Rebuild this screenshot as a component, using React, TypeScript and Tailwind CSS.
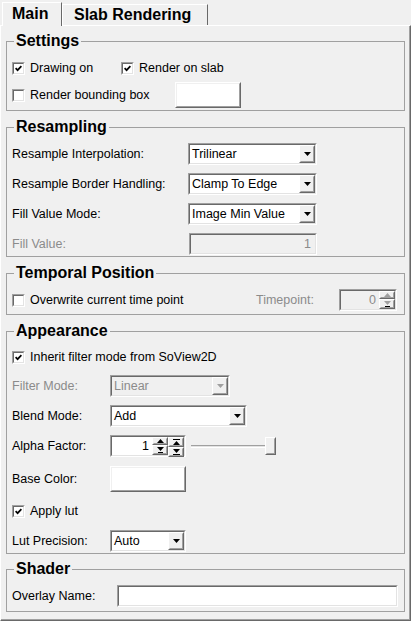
import React from "react";

// Windows-classic style property panel

const sunkenOuter = "border border-t-[#a0a0a0] border-l-[#a0a0a0] border-b-white border-r-white";
const sunkenInner = "border border-t-[#696969] border-l-[#696969] border-b-[#e3e3e3] border-r-[#e3e3e3]";
const raisedOuter = "border border-t-white border-l-white border-b-[#696969] border-r-[#696969]";
const raisedInner = "border border-t-[#f0f0f0] border-l-[#f0f0f0] border-b-[#a0a0a0] border-r-[#a0a0a0]";

const Down = ({ color = "#000" }: { color?: string }) => (
    <svg width="7" height="4" viewBox="0 0 7 4">
        <polygon points="0,0 7,0 3.5,4" fill={color} />
    </svg>
);

const Up = ({ color = "#000" }: { color?: string }) => (
    <svg width="7" height="4" viewBox="0 0 7 4">
        <polygon points="0,4 7,4 3.5,0" fill={color} />
    </svg>
);

const Check = ({ on }: { on?: boolean }) => (
    <span className={`w-[13px] h-[13px] shrink-0 flex ${sunkenOuter}`}>
        <span className={`flex-1 bg-white flex items-center justify-center ${sunkenInner}`}>
            {on && (
                <svg width="7" height="7" viewBox="0 0 7 7">
                    <path d="M0.6 3.2 L2.6 5.2 L6.4 1.2" stroke="#000" strokeWidth="1.7" fill="none" />
                </svg>
            )}
        </span>
    </span>
);

const CheckRow = ({ on, label }: { on?: boolean; label: string }) => (
    <span className="flex items-center gap-[5px]">
        <Check on={on} />
        <span>{label}</span>
    </span>
);

const Select = ({ value, className, disabled }: { value: string; className: string; disabled?: boolean }) => (
    <div className={`h-[22px] flex shrink-0 ${sunkenOuter} ${className}`}>
        <div className={`flex-1 flex items-center ${disabled ? "bg-[#f0f0f0] text-[#8b8b8b]" : "bg-white"} ${sunkenInner}`}>
            <span className="flex-1 pl-[2px] leading-none">{value}</span>
            <div className={`w-[16px] h-full flex ${raisedOuter} bg-[#f0f0f0]`}>
                <div className={`flex-1 flex items-center justify-center ${raisedInner}`}>
                    <Down color={disabled ? "#a0a0a0" : "#000"} />
                </div>
            </div>
        </div>
    </div>
);

const SpinButtons = ({ disabled, double }: { disabled?: boolean; double?: boolean }) => {
    const c = disabled ? "#a0a0a0" : "#000";
    return (
        <div className="w-[16px] h-full flex flex-col bg-[#f0f0f0]">
            <div className={`flex-1 flex ${raisedOuter}`}>
                <div className={`flex-1 flex flex-col items-center justify-center gap-[1px] ${raisedInner}`}>
                    {double && <span className="w-[7px] h-[1px] bg-black" />}
                    <Up color={c} />
                </div>
            </div>
            <div className={`flex-1 flex ${raisedOuter}`}>
                <div className={`flex-1 flex flex-col items-center justify-center gap-[1px] ${raisedInner}`}>
                    <Down color={c} />
                    {double ? <span className="w-[7px] h-[1px] bg-black" /> : <span className="w-[5px] h-[1px] bg-black" />}
                </div>
            </div>
        </div>
    );
};

const ColorButton = ({ className }: { className: string }) => (
    <div className={`h-[26px] flex shrink-0 ${raisedOuter} ${className}`}>
        <div className={`flex-1 bg-white ${raisedInner}`} />
    </div>
);

const Group = ({ title, className, children }: { title: string; className: string; children: React.ReactNode }) => (
    <fieldset className={`border border-[#a0a0a0] ${className}`}>
        <legend className="ml-[7px] px-[2px] font-bold text-[16px] leading-[18px]">{title}</legend>
        {children}
    </fieldset>
);

export default function App() {
    return (
        <div className="w-[411px] h-[621px] bg-[#f0f0f0] text-[12.5px] text-black font-['Liberation_Sans',Arial,sans-serif] flex flex-col">
            {/* tabs */}
            <div className="h-[26px] flex items-end pl-[2px] relative z-10 shrink-0">
                <div className="w-[60px] h-[24px] bg-[#f0f0f0] border-t border-l border-white border-r border-r-[#696969] pl-[9px] pt-[1px] font-bold text-[16px] leading-[20px]">
                    Main
                </div>
                <div className="w-[146px] h-[21px] mb-[1px] border-t border-l border-white border-r border-r-[#696969] pl-[11px] font-bold text-[16px] leading-[19px]">
                    Slab Rendering
                </div>
            </div>

            {/* panel */}
            <div className="-mt-[1px] flex-1 flex flex-col border-t border-l border-white border-r border-b border-r-[#696969] border-b-[#696969] shadow-[inset_-1px_-1px_0_#a0a0a0] pl-[5px] pr-[5px] pt-[6px]">
                <Group title="Settings" className="">
                    <div className="flex flex-col gap-[4px] pt-[8px] pb-[2px] pl-[5px]">
                        <div className="h-[20px] flex items-center">
                            <span className="w-[109px]">
                                <CheckRow on label="Drawing on" />
                            </span>
                            <CheckRow on label="Render on slab" />
                        </div>
                        <div className="h-[26px] flex items-center">
                            <span className="w-[163px]">
                                <CheckRow label="Render bounding box" />
                            </span>
                            <ColorButton className="w-[66px]" />
                        </div>
                    </div>
                </Group>

                <Group title="Resampling" className="mt-[7px]">
                    <div className="flex flex-col gap-[8px] pt-[7px] pb-[1px] pl-[5px]">
                        <div className="h-[22px] flex items-center">
                            <span className="w-[176px]">Resample Interpolation:</span>
                            <Select value="Trilinear" className="w-[129px]" />
                        </div>
                        <div className="h-[22px] flex items-center">
                            <span className="w-[176px]">Resample Border Handling:</span>
                            <Select value="Clamp To Edge" className="w-[129px]" />
                        </div>
                        <div className="h-[22px] flex items-center">
                            <span className="w-[176px]">Fill Value Mode:</span>
                            <Select value="Image Min Value" className="w-[129px]" />
                        </div>
                        <div className="h-[22px] flex items-center text-[#8b8b8b]">
                            <span className="w-[177px]">Fill Value:</span>
                            <div className={`w-[128px] h-[22px] flex ${sunkenOuter}`}>
                                <div className={`flex-1 flex items-center justify-end pr-[4px] bg-[#f0f0f0] ${sunkenInner}`}>1</div>
                            </div>
                        </div>
                    </div>
                </Group>

                <Group title="Temporal Position" className="mt-[7px]">
                    <div className="h-[22px] mt-[7px] mb-[3px] pl-[5px] flex items-center">
                        <span className="w-[244px]">
                            <CheckRow label="Overwrite current time point" />
                        </span>
                        <span className="w-[83px] text-[#8b8b8b]">Timepoint:</span>
                        <div className={`w-[58px] h-[22px] flex ${sunkenOuter}`}>
                            <div className={`flex-1 flex items-center bg-[#f0f0f0] ${sunkenInner}`}>
                                <span className="flex-1 text-right pr-[3px] text-[#8b8b8b]">0</span>
                                <SpinButtons disabled />
                            </div>
                        </div>
                    </div>
                </Group>

                <Group title="Appearance" className="mt-[7px]">
                    <div className="flex flex-col gap-[8px] pt-[7px] pb-[1px] pl-[5px]">
                        <div className="h-[20px] flex items-center">
                            <CheckRow on label="Inherit filter mode from SoView2D" />
                        </div>
                        <div className="h-[22px] flex items-center">
                            <span className="w-[98px] text-[#8b8b8b]">Filter Mode:</span>
                            <Select value="Linear" className="w-[120px]" disabled />
                        </div>
                        <div className="h-[22px] flex items-center">
                            <span className="w-[98px]">Blend Mode:</span>
                            <Select value="Add" className="w-[137px]" />
                        </div>
                        <div className="h-[22px] flex items-center">
                            <span className="w-[98px]">Alpha Factor:</span>
                            <div className={`w-[76px] h-[22px] flex ${sunkenOuter}`}>
                                <div className={`flex-1 flex items-center bg-white ${sunkenInner}`}>
                                    <span className="flex-1 text-right pr-[3px]">1</span>
                                    <SpinButtons />
                                    <SpinButtons double />
                                </div>
                            </div>
                            <div className="ml-[5px] w-[85px] h-[22px] flex items-center relative">
                                <div className="w-[80px] h-[3px] border-t border-t-[#a0a0a0] border-b border-b-white bg-[#e3e3e3]" />
                                <div className={`absolute left-[74px] top-[2px] w-[11px] h-[18px] flex bg-[#f0f0f0] ${raisedOuter}`}>
                                    <div className={`flex-1 ${raisedInner}`} />
                                </div>
                            </div>
                        </div>
                        <div className="h-[26px] mt-[1px] flex items-center">
                            <span className="w-[98px]">Base Color:</span>
                            <ColorButton className="w-[76px]" />
                        </div>
                        <div className="h-[20px] mt-[1px] flex items-center">
                            <CheckRow on label="Apply lut" />
                        </div>
                        <div className="h-[22px] mt-[1px] flex items-center">
                            <span className="w-[98px]">Lut Precision:</span>
                            <Select value="Auto" className="w-[76px]" />
                        </div>
                    </div>
                </Group>

                <Group title="Shader" className="mt-[6px]">
                    <div className="h-[22px] mt-[7px] mb-[4px] pl-[5px] flex items-center">
                        <span className="w-[105px]">Overlay Name:</span>
                        <div className={`w-[281px] h-[22px] flex ${sunkenOuter}`}>
                            <div className={`flex-1 bg-white ${sunkenInner}`} />
                        </div>
                    </div>
                </Group>
            </div>
        </div>
    );
}
